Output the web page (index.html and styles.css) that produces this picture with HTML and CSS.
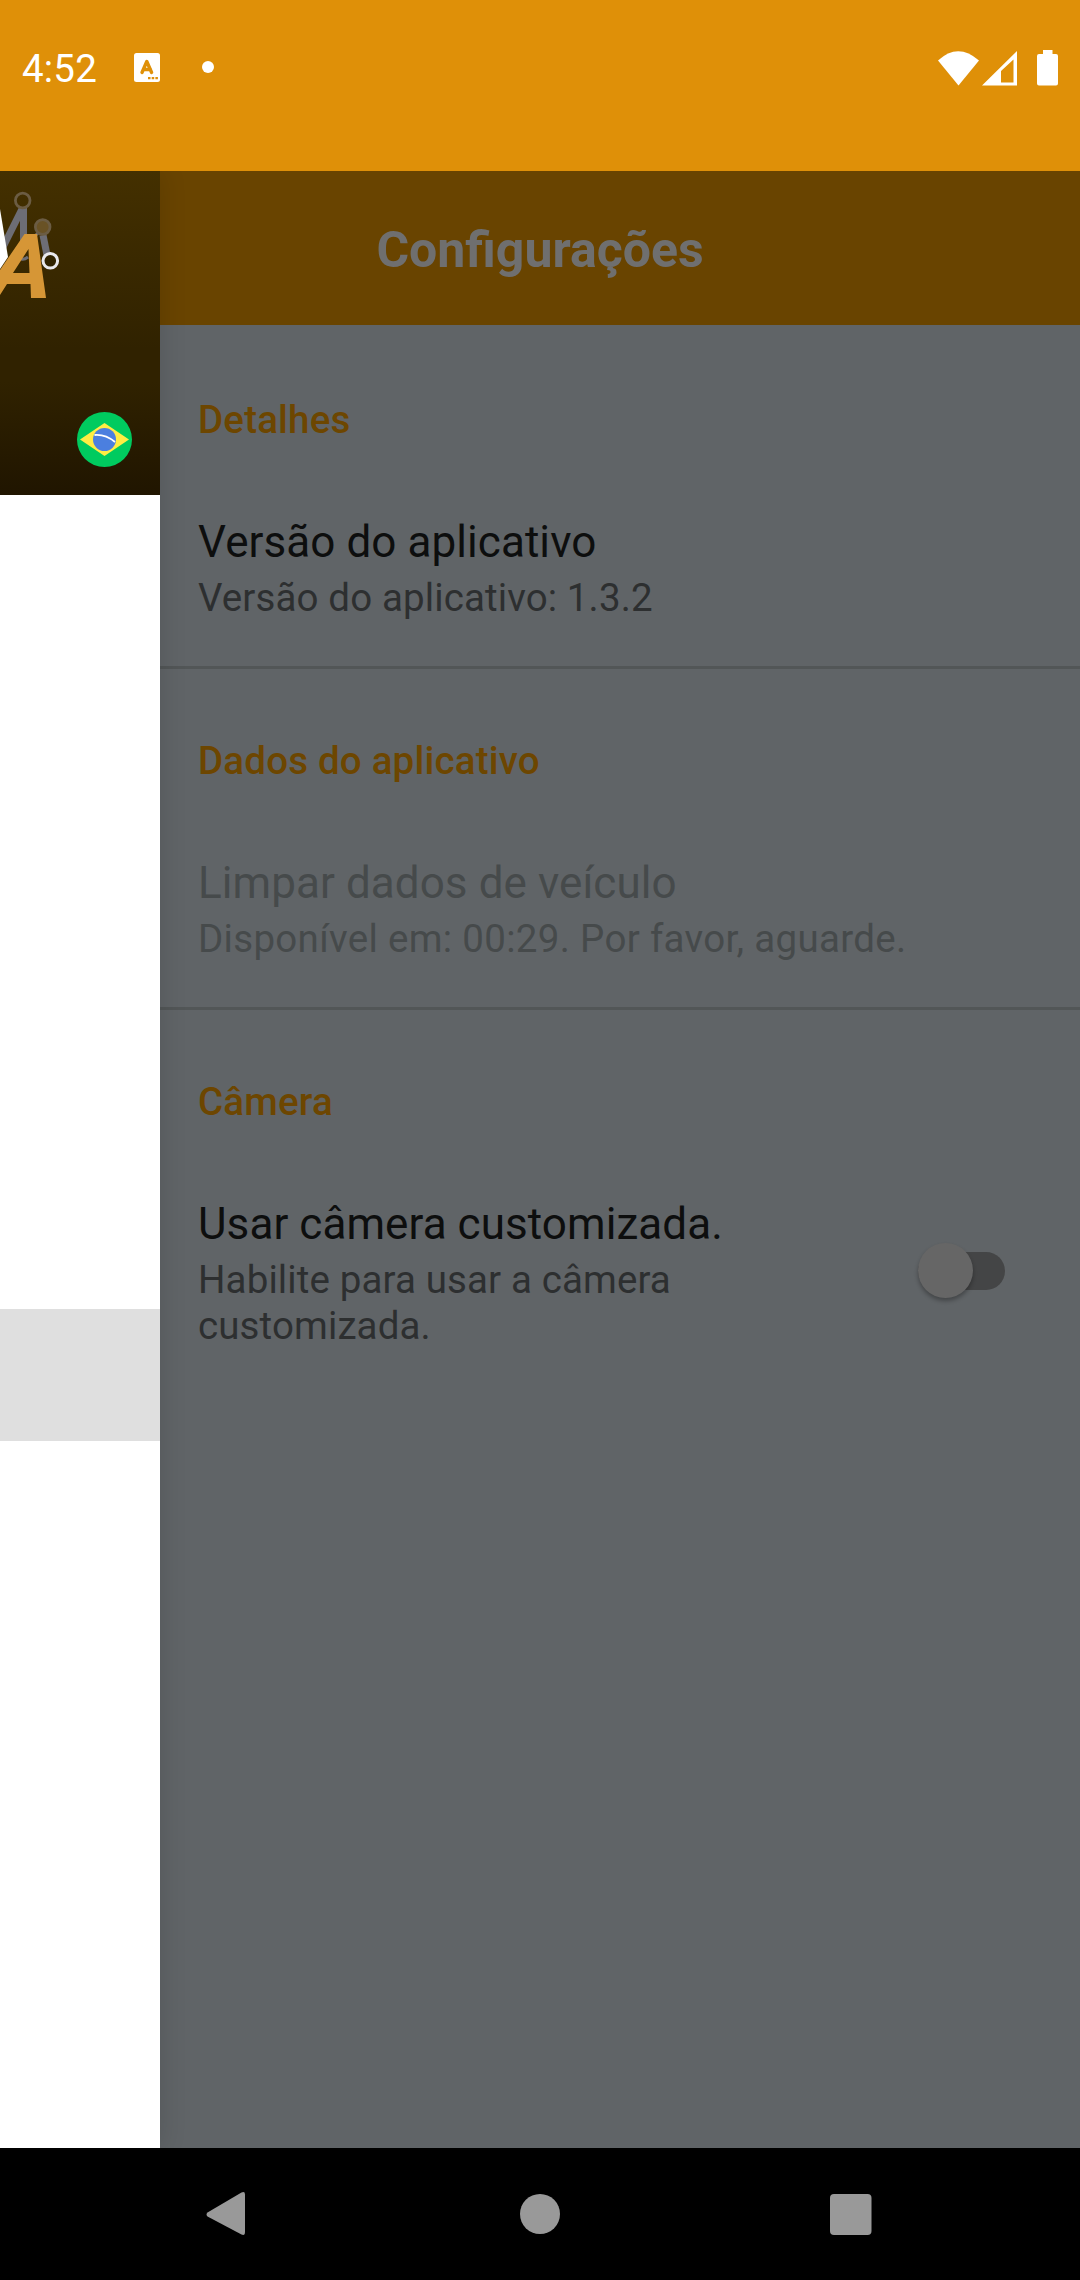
FILE: index.html
```html
<!DOCTYPE html>
<html lang="pt-BR">
<head>
<meta charset="utf-8">
<title>Configurações</title>
<link rel="stylesheet" href="styles.css">
</head>
<body>
<div class="phone">
  <header class="status">
    <span class="clock">4:52</span>
    <svg class="app-icon" width="26" height="29" viewBox="0 0 26 29"><rect width="26" height="29" rx="2.5" fill="#fff"/><path d="M8 19.500 12.800 8.500 17.600 19.500M9.500 16.500h7" fill="none" stroke="#df9008" stroke-width="3.400" stroke-linecap="round" stroke-linejoin="round"/><path d="M14 24h2.500v2.200H14zM17.700 24h2.500v2.200h-2.500zM21.400 24h2.500v2.200h-2.500z" fill="#df9008"/></svg>
    <span class="dot"></span>
    <span class="spacer"></span>
    <svg class="signals" width="122" height="37" viewBox="0 0 122 37" fill="#fff"><path d="M0 11.500Q20 -7 41 11.500L20.500 36.500Z"/><path fill-rule="evenodd" d="M44 36.500 79 2v34.500ZM63 22v11.500h12.500V10.500Z"/><path d="M105 1h9.500v4H118q2 0 2 2v27.500q0 2-2 2h-17q-2 0-2-2V7q0-2 2-2h4Z"/></svg>
  </header>
  <div class="body">
    <main class="screen">
      <h1 class="toolbar">Configurações</h1>
      <section class="group">
        <h2>Detalhes</h2>
        <h3>Versão do aplicativo</h3>
        <p>Versão do aplicativo: 1.3.2</p>
      </section>
      <section class="group">
        <h2>Dados do aplicativo</h2>
        <div class="disabled"><h3>Limpar dados de veículo</h3>
        <p>Disponível em: 00:29. Por favor, aguarde.</p></div>
      </section>
      <section class="group">
        <h2>Câmera</h2>
        <div class="row">
          <div class="copy"><h3>Usar câmera customizada.</h3>
          <p>Habilite para usar a câmera customizada.</p></div>
          <div class="switch"><span class="thumb"></span></div>
        </div>
      </section>
    </main>
    <aside class="drawer">
      <div class="cover">
        <svg width="160" height="324" viewBox="0 0 160 324">
          <g fill="none" stroke="#6d6d75">
            <path d="M22.500 37 3 76" stroke-width="7"/><path d="M23.500 37V70" stroke-width="7"/><path d="M43 64 47 84" stroke-width="7"/><path d="M19 87q4 3 9-1M34 66l5-5" stroke-width="3"/>
            <circle cx="22.700" cy="29.500" r="7.300" stroke="#6b5c43" stroke-width="2.800"/>
            <circle cx="42.700" cy="56" r="7.300" fill="#695225" stroke="#6b5c43" stroke-width="2.800"/>
            <path d="M0 38 8 86 0 98Z" fill="#fff" stroke="none"/>
          </g>
          <path fill="#d69636" fill-rule="evenodd" d="M0 99 24.500 63H37L46 127H31L30.500 113H7L0 124ZM28.500 78 13 102H29.500Z"/>
          <circle cx="50.300" cy="89.800" r="7.300" fill="#302300" stroke="#e9e9ed" stroke-width="3"/>
          <circle cx="104.500" cy="268.500" r="27.500" fill="#00cb5f"/>
          <path d="M80 268.500 104.500 252 129 268.500 104.500 285Z" fill="#ffed43"/>
          <circle cx="104.500" cy="268.500" r="11.500" fill="#4b7fdf"/>
          <path d="M94.500 264q11-1 20.500 7" fill="none" stroke="#fff" stroke-width="1.800"/>
        </svg>
      </div>
      <div class="selected"></div>
    </aside>
  </div>
  <nav class="navbar">
    <svg width="1080" height="132" viewBox="0 0 1080 132" fill="#999"><path d="M207.500 64.500 241.500 44.500q3.500-1.500 3.500 2V84q0 4-3.500 2.500L207.500 68.500q-2-2 0-4Z"/><circle cx="540" cy="66" r="20"/><rect x="830" y="46" width="41.500" height="41" rx="4"/></svg>
  </nav>
</div>
</body>
</html>
```
FILE: styles.css
```css
* { box-sizing: border-box; margin: 0; padding: 0; }
body { font-family: Roboto, "Liberation Sans", sans-serif; font-size: 38.5px; }
.phone { display: flex; flex-direction: column; width: 1080px; height: 2280px; overflow: hidden; }
.status { display: flex; align-items: flex-start; height: 171px; padding: 44px 20px 0 22px; background: #df9008; color: #fff; }
.clock { width: 111.500px; font-size: 38.5px; line-height: 50px; letter-spacing: .2px; }
.app-icon { margin-top: 9px; }
.dot { width: 12px; height: 12px; margin: 17px 0 0 42px; border-radius: 50%; background: #fff; }
.spacer { flex: 1; }
.signals { margin-top: 5px; }
.body { display: grid; height: 1977px; }
.screen, .drawer { grid-area: 1 / 1; }
.screen { background: #606467; }
.toolbar { height: 154px; background: #694400; color: #6f6f6f; font-size: 49.5px; font-weight: 700; line-height: 159px; text-align: center; }
.toolbar { font-size: 50px; font-feature-settings: "liga" 1; }
.group { height: 341px; padding: 69px 75px 0 198px; border-bottom: 3px solid #525657; }
.toolbar + .group { height: 344px; padding-top: 72px; }
.group:last-child { height: auto; border: 0; }
h2 { color: #6d4600; font-size: 38.5px; font-weight: 500; line-height: 45px; letter-spacing: .19px; }
h3 { margin-top: 74px; color: #0d0e0e; font-size: 44px; font-weight: 400; line-height: 52px; letter-spacing: .07px; }
p { margin-top: 7px; color: #2d2f30; font-size: 38.5px; line-height: 46px; letter-spacing: .12px; }
.disabled h3 { color: #464a4b; }
.disabled p { color: #464a4b; letter-spacing: .31px; }
.row { display: flex; justify-content: space-between; }
.copy { width: 600px; }
.switch { flex: none; width: 87px; height: 38px; margin: 128px 0 0; border-radius: 19px; background: #444546; }
.thumb { display: block; width: 55px; height: 55px; margin-top: -9px; border-radius: 50%; background: #666; box-shadow: 0 3px 4px rgba(0,0,0,.3); }
.drawer { width: 160px; background: #fff; box-shadow: 2px 0 24px rgba(0,0,0,.12); clip-path: inset(0 -40px 0 0); }
.cover { height: 324px; background: linear-gradient(#443000, #302200 55%, #302200 65%, #201500); }
.cover svg, .navbar svg { display: block; }
.selected { height: 132px; margin-top: 814px; background: #dfdfdf; }
.navbar { height: 132px; background: #000; }
```
